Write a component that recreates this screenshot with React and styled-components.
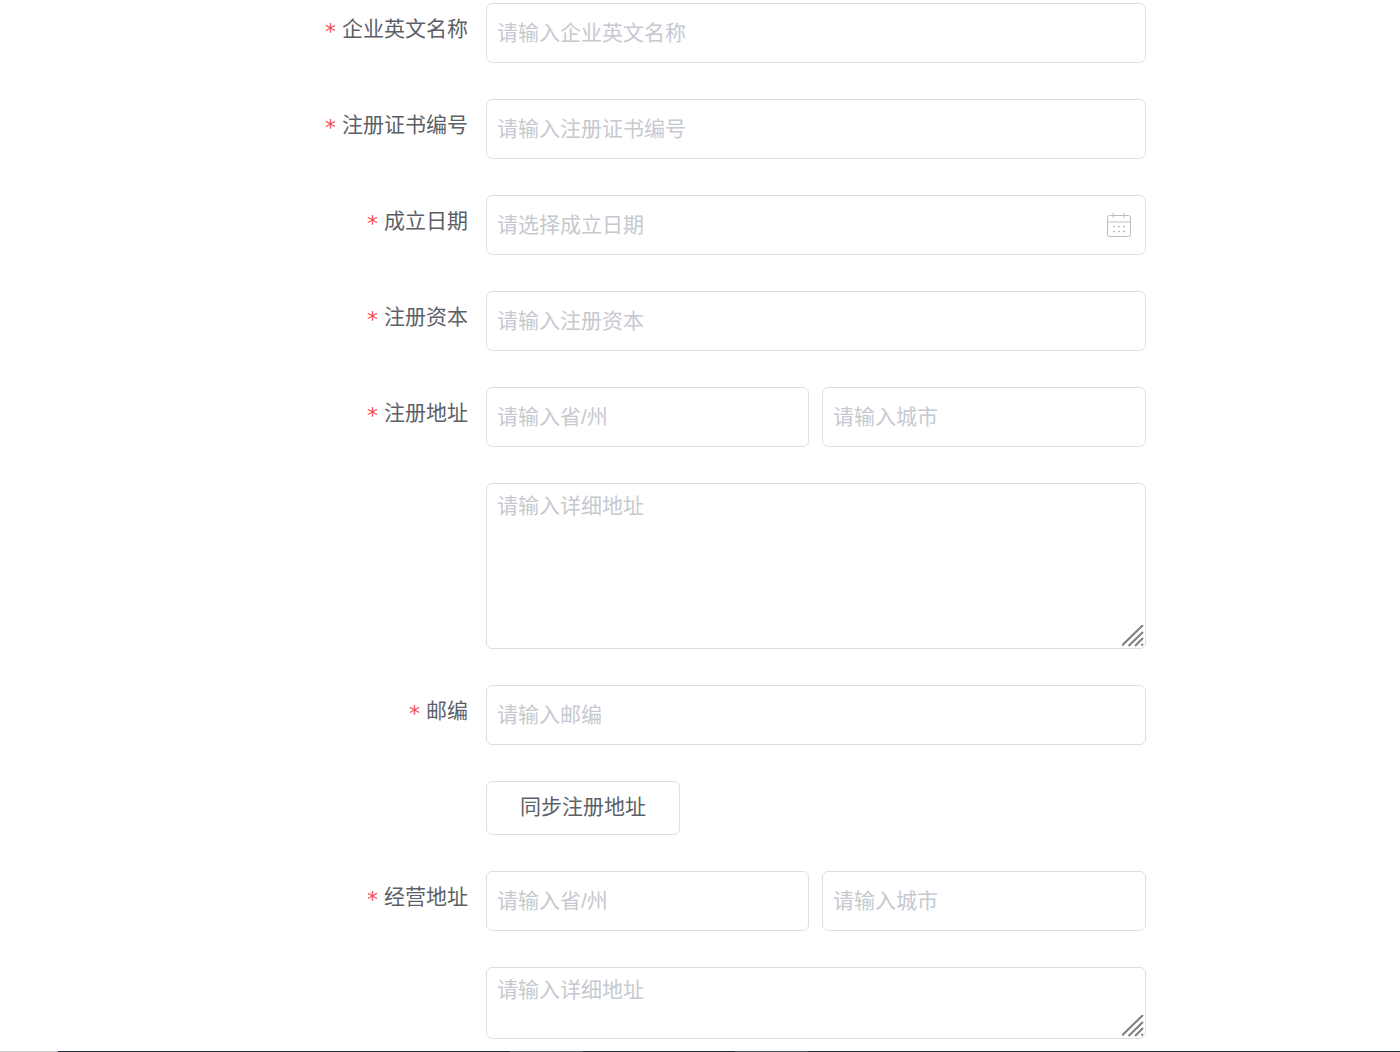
import React from 'react';
import styled, { createGlobalStyle } from 'styled-components';

const FONT = `"Helvetica Neue", "Liberation Sans", "Noto Sans CJK SC", sans-serif`;

const GlobalStyle = createGlobalStyle`
  html, body {
    margin: 0;
    padding: 0;
    background: #fff;
    overflow: hidden;
  }
  * {
    box-sizing: border-box;
  }
`;

function CalendarIcon() {
  return (
    <CalendarSvg viewBox="0 0 24 24" fill="none" stroke="currentColor">
      <rect x="0.5" y="2.5" width="23" height="21" rx="2" />
      <path d="M0.5 9h23M6 0v5M17 0v5" />
      <path d="M6 13.5h2M11 13.5h2M16 13.5h2M6 18.5h2M11 18.5h2M16 18.5h2" strokeWidth="1.4" />
    </CalendarSvg>
  );
}

function ResizeGrip() {
  return (
    <GripSvg viewBox="0 0 24 24" fill="none" stroke="currentColor">
      <path d="M0 20.5L21 0M6.5 21L21 7M13 21L21 13M19.5 20.5L21 19" strokeWidth="2.1" />
    </GripSvg>
  );
}

function Field({ label, children }) {
  return (
    <Row>
      <Label $required={!!label}>{label}</Label>
      <Control>{children}</Control>
    </Row>
  );
}

function Address({ label, height }) {
  return (
    <>
      <Field label={label}>
        <Split>
          <Input placeholder="请输入省/州" />
          <Input placeholder="请输入城市" />
        </Split>
      </Field>
      <Field>
        <AreaWrap>
          <TextArea $height={height} placeholder="请输入详细地址" />
          <ResizeGrip />
        </AreaWrap>
      </Field>
    </>
  );
}

export default function App() {
  return (
    <Page>
      <GlobalStyle />
      <Form>
        <Field label="企业英文名称">
          <Input placeholder="请输入企业英文名称" />
        </Field>
        <Field label="注册证书编号">
          <Input placeholder="请输入注册证书编号" />
        </Field>
        <Field label="成立日期">
          <DateWrap>
            <Input placeholder="请选择成立日期" />
            <CalendarIcon />
          </DateWrap>
        </Field>
        <Field label="注册资本">
          <Input placeholder="请输入注册资本" />
        </Field>
        <Address label="注册地址" height={166} />
        <Field label="邮编">
          <Input placeholder="请输入邮编" />
        </Field>
        <Field>
          <SyncButton type="button">同步注册地址</SyncButton>
        </Field>
        <Address label="经营地址" height={72} />
      </Form>
      <BottomBar>
        <BarPart $width={58} $color="#c8c8c8" />
        <BarPart $width={452} $color="#22303a" />
        <BarPart $width={73} $color="#4b565e" />
        <BarPart $width={152} $color="#22303a" />
        <BarPart $width={73} $color="#4b565e" />
        <BarPart $width={592} $color="#22303a" />
      </BottomBar>
    </Page>
  );
}

const Page = styled.div`
  height: 100vh;
  display: flex;
  flex-direction: column;
  font-family: ${FONT};
  overflow: hidden;
`;

const Form = styled.form`
  flex: 1;
  min-height: 0;
  width: 1146px;
  padding-top: 3px;
  overflow: hidden;
`;

const Row = styled.div`
  display: flex;
  margin-bottom: 36px;
`;

const Label = styled.label`
  flex: 0 0 486px;
  padding-right: 18px;
  text-align: right;
  font-size: 21px;
  line-height: 51px;
  color: #5c5f68;

  ${(p) =>
    p.$required &&
    `
    &::before {
      content: "*";
      display: inline-block;
      font-family: "DejaVu Sans", sans-serif;
      font-size: 22px;
      color: #f24f4f;
      margin-right: 6px;
      transform: translateY(3px);
    }
  `}
`;

const Control = styled.div`
  flex: 1;
  min-width: 0;
`;

const Split = styled.div`
  display: grid;
  grid-template-columns: 323px 324px;
  column-gap: 13px;
`;

const Input = styled.input`
  display: block;
  width: 100%;
  height: 60px;
  padding: 0 10px 1px;
  border: 1px solid #dcdfe6;
  border-radius: 6px;
  outline: none;
  background: #fff;
  font-family: ${FONT};
  font-size: 21px;
  color: #606266;

  &::placeholder {
    color: #c6c9d0;
    opacity: 1;
  }
`;

const AreaWrap = styled.div`
  position: relative;
`;

const TextArea = styled.textarea`
  display: block;
  width: 100%;
  height: ${(p) => p.$height}px;
  padding: 6px 10px;
  border: 1px solid #dcdfe6;
  border-radius: 6px;
  outline: none;
  resize: none;
  background: #fff;
  font-family: ${FONT};
  font-size: 21px;
  line-height: 31px;
  color: #606266;

  &::placeholder {
    color: #c6c9d0;
    opacity: 1;
  }
`;

const GripSvg = styled.svg`
  position: absolute;
  right: 0;
  bottom: 0;
  width: 24px;
  height: 24px;
  color: #808080;
  pointer-events: none;
`;

const DateWrap = styled.div`
  position: relative;
`;

const CalendarSvg = styled.svg`
  position: absolute;
  top: 18px;
  right: 15px;
  width: 24px;
  height: 24px;
  color: #bcbec2;
`;

const SyncButton = styled.button`
  display: block;
  width: 194px;
  height: 54px;
  padding: 0 0 7px;
  border: 1px solid #dcdfe6;
  border-radius: 6px;
  background: #fff;
  font-family: ${FONT};
  font-size: 21px;
  color: #5c5f68;
`;

const BottomBar = styled.div`
  flex: 0 0 1px;
  display: flex;
`;

const BarPart = styled.div`
  width: ${(p) => p.$width}px;
  background: ${(p) => p.$color};
`;
